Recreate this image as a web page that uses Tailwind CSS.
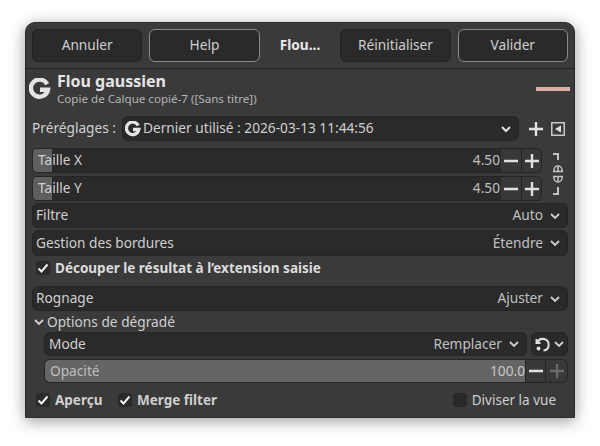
<!DOCTYPE html>
<html lang="fr">
<head>
  <meta charset="UTF-8" />
  <title>Flou gaussien</title>
  <script src="https://cdn.jsdelivr.net/npm/@tailwindcss/browser@4"></script>
</head>
<body class="bg-white font-['Noto_Sans',sans-serif] text-[13.7px] text-[#cfcfcf] overflow-hidden">

<div class="w-[600px] h-[446px] pt-[22px] pl-[25px]">
  <div class="w-[550px] h-[396px] bg-[#3a3a3a] rounded-t-[10px] border border-[#2c2c2c] shadow-[0_3px_16px_rgba(0,0,0,0.4)] flex flex-col">

    <!-- Header -->
    <header class="h-[46px] shrink-0 border-b border-[#222] px-[6px] pt-[6px] flex gap-[7px]">
      <button class="w-[111px] h-[33px] rounded-[6px] bg-[#2a2a2a] border border-[#222]">Annuler</button>
      <button class="w-[111px] h-[33px] rounded-[6px] bg-[#2a2a2a] border border-[#8a8a8a]">Help</button>
      <div class="w-[67px] h-[33px] flex items-center justify-center font-bold text-[#e8e8e8]">Flou...</div>
      <button class="w-[111px] h-[33px] rounded-[6px] bg-[#2a2a2a] border border-[#222]">Réinitialiser</button>
      <button class="w-[111px] h-[33px] rounded-[6px] bg-[#2a2a2a] border border-[#8a8a8a]">Valider</button>
    </header>

    <!-- Title -->
    <div class="h-[40px] pl-[3px] pr-[3px] flex items-start">
      <svg class="w-[22px] h-[22px] mt-[9px]" viewBox="0 0 22 22" fill="none" stroke="#e4e4e4" stroke-width="4.4"><path d="M18.2 6.2A8.6 8.6 0 1 0 19 11.7H11"/></svg>
      <div class="ml-[6px] flex-1">
        <div class="font-bold text-[16px] leading-[20px] text-[#e4e4e4] mt-[2px]">Flou gaussien</div>
        <div class="text-[11.6px] leading-[15px] text-[#b5b5b5]">Copie de Calque copié-7 ([Sans titre])</div>
      </div>
      <div class="w-[34px] h-[4px] mt-[18px] bg-[#dcb0a8] mr-[1px]"></div>
    </div>

    <main class="px-[6px] mt-[7px]">
      <!-- Presets -->
      <div class="h-[25px] flex items-center">
        <span class="w-[90px]">Préréglages :</span>
        <div class="w-[397px] h-[25px] rounded-[6px] bg-[#2a2a2a] border border-[#252525] flex items-center pl-[2px] pr-[6px]">
          <svg class="w-[16px] h-[16px] mr-[2px]" viewBox="0 0 22 22" fill="none" stroke="#e4e4e4" stroke-width="4.6"><path d="M18.2 6.2A8.6 8.6 0 1 0 19 11.7H11"/></svg>
          <span class="flex-1">Dernier utilisé : 2026-03-13 11:44:56</span>
          <svg class="w-[12px] h-[12px]" viewBox="0 0 12 12" fill="none" stroke="#e0e0e0" stroke-width="2"><path d="M2 4l4 4 4-4"/></svg>
        </div>
        <svg class="w-[14px] h-[14px] ml-[10px]" viewBox="0 0 14 14" fill="none" stroke="#e0e0e0" stroke-width="2.4"><path d="M7 0v14M0 7h14"/></svg>
        <svg class="w-[14px] h-[14px] ml-[8px]" viewBox="0 0 14 14"><rect x=".75" y=".75" width="12.5" height="12.5" fill="none" stroke="#c8c8c8" stroke-width="1.5"/><path d="M10 3.5v7L4 7z" fill="#e0e0e0"/></svg>
      </div>

      <!-- Size -->
      <div class="mt-[7px] flex">
        <div class="w-[510px] flex flex-col gap-[3px]">
          <div class="relative h-[25px] rounded-[5px] bg-[#2a2a2a] border border-[#252525] flex items-center overflow-hidden">
            <div class="absolute inset-y-0 left-0 w-[19px] bg-[#5f5f5f]"></div>
            <span class="relative pl-[5px] flex-1">Taille X</span>
            <span class="pr-[1px] text-[#c0c0c0]">4.50</span>
            <div class="w-[21px] h-full bg-[#383838] border-r border-[#252525] flex items-center justify-center"><svg class="w-[14px] h-[14px]" viewBox="0 0 14 14" stroke="#e0e0e0" stroke-width="2.4"><path d="M0 7h14"/></svg></div>
            <div class="w-[19px] h-full bg-[#383838] flex items-center justify-center"><svg class="w-[14px] h-[14px]" viewBox="0 0 14 14" stroke="#e0e0e0" stroke-width="2.4"><path d="M7 0v14M0 7h14"/></svg></div>
          </div>
          <div class="relative h-[25px] rounded-[5px] bg-[#2a2a2a] border border-[#252525] flex items-center overflow-hidden">
            <div class="absolute inset-y-0 left-0 w-[19px] bg-[#5f5f5f]"></div>
            <span class="relative pl-[5px] flex-1">Taille Y</span>
            <span class="pr-[1px] text-[#c0c0c0]">4.50</span>
            <div class="w-[21px] h-full bg-[#383838] border-r border-[#252525] flex items-center justify-center"><svg class="w-[14px] h-[14px]" viewBox="0 0 14 14" stroke="#e0e0e0" stroke-width="2.4"><path d="M0 7h14"/></svg></div>
            <div class="w-[19px] h-full bg-[#383838] flex items-center justify-center"><svg class="w-[14px] h-[14px]" viewBox="0 0 14 14" stroke="#e0e0e0" stroke-width="2.4"><path d="M7 0v14M0 7h14"/></svg></div>
          </div>
        </div>
        <svg class="w-[14px] h-[44px] ml-[8px] mt-[4px]" viewBox="0 0 14 44" fill="none" stroke="#c4c4c4" stroke-width="2"><path d="M3 2h5v6M8 35v7H3"/><path stroke-width="1.5" d="M4 19v-1a4 4 0 0 1 8 0v1M4 25v1a4 4 0 0 0 8 0v-1M3 19.5h10M3 24.5h10M8 15v5M8 24v5"/></svg>
      </div>

      <!-- Combos -->
      <div class="mt-[2px] h-[25px] rounded-[6px] bg-[#2a2a2a] border border-[#252525] flex items-center pl-[3px] pr-[6px]">
        <span class="flex-1">Filtre</span><span class="mr-[6px] text-[#c0c0c0]">Auto</span>
        <svg class="w-[12px] h-[12px]" viewBox="0 0 12 12" fill="none" stroke="#d0d0d0" stroke-width="1.8"><path d="M2 4l4 4 4-4"/></svg>
      </div>
      <div class="mt-[2px] h-[26px] rounded-[6px] bg-[#2a2a2a] border border-[#252525] flex items-center pl-[3px] pr-[6px]">
        <span class="flex-1">Gestion des bordures</span><span class="mr-[6px] text-[#c0c0c0]">Étendre</span>
        <svg class="w-[12px] h-[12px]" viewBox="0 0 12 12" fill="none" stroke="#d0d0d0" stroke-width="1.8"><path d="M2 4l4 4 4-4"/></svg>
      </div>

      <!-- Clip -->
      <div class="mt-[4px] h-[16px] pl-[4px] flex items-center gap-[5px] font-bold text-[13.5px] text-[#dcdcdc]">
        <div class="w-[14px] h-[14px] rounded-[3px] bg-[#2a2a2a] flex items-center justify-center"><svg class="w-[12px] h-[12px]" viewBox="0 0 12 12" fill="none" stroke="#f0f0f0" stroke-width="2"><path d="M1.5 6.5l3 3 6-7"/></svg></div>
        <span>Découper le résultat à l’extension saisie</span>
      </div>

      <div class="mt-[10px] h-[25px] rounded-[6px] bg-[#2a2a2a] border border-[#252525] flex items-center pl-[3px] pr-[6px]">
        <span class="flex-1">Rognage</span><span class="mr-[6px] text-[#c0c0c0]">Ajuster</span>
        <svg class="w-[12px] h-[12px]" viewBox="0 0 12 12" fill="none" stroke="#d0d0d0" stroke-width="1.8"><path d="M2 4l4 4 4-4"/></svg>
      </div>

      <!-- Blending -->
      <div class="mt-[1px] h-[20px] pl-[1px] flex items-center gap-[2px]">
        <svg class="w-[12px] h-[12px]" viewBox="0 0 12 12" fill="none" stroke="#d0d0d0" stroke-width="1.8"><path d="M2 4l4 4 4-4"/></svg>
        <span>Options de dégradé</span>
      </div>
      <div class="ml-[12px]">
        <div class="flex gap-[4px]">
          <div class="flex-1 h-[24px] rounded-[6px] bg-[#2a2a2a] border border-[#252525] flex items-center pl-[4px] pr-[6px]">
            <span class="flex-1">Mode</span><span class="mr-[6px] text-[#c0c0c0]">Remplacer</span>
            <svg class="w-[12px] h-[12px]" viewBox="0 0 12 12" fill="none" stroke="#d0d0d0" stroke-width="1.8"><path d="M2 4l4 4 4-4"/></svg>
          </div>
          <div class="w-[37px] h-[24px] rounded-[6px] bg-[#2a2a2a] border border-[#252525] flex items-center pl-[3px] gap-[1px]">
            <svg class="w-[17px] h-[17px]" viewBox="0 0 17 17" fill="none" stroke="#e0e0e0" stroke-width="2"><path d="M2.5 6.5A5.8 5.8 0 1 1 8.5 14.5M1.5 3v4h4"/><circle cx="3.5" cy="12.5" r="1.9" fill="#e0e0e0" stroke="none"/></svg>
            <svg class="w-[12px] h-[12px]" viewBox="0 0 12 12" fill="none" stroke="#d0d0d0" stroke-width="1.8"><path d="M2 4l4 4 4-4"/></svg>
          </div>
        </div>
        <div class="mt-[3px] h-[24px] rounded-[6px] bg-[#2a2a2a] border border-[#252525] flex items-center overflow-hidden">
          <div class="flex-1 h-full bg-[#656565] flex items-center pl-[5px]">
            <span class="flex-1 text-[#bdbdbd]">Opacité</span><span class="text-[#c8c8c8]">100.0</span>
          </div>
          <div class="w-[21px] h-full bg-[#383838] border-x border-[#252525] flex items-center justify-center"><svg class="w-[14px] h-[14px]" viewBox="0 0 14 14" stroke="#e0e0e0" stroke-width="2.4"><path d="M0 7h14"/></svg></div>
          <div class="w-[21px] h-full bg-[#383838] flex items-center justify-center"><svg class="w-[14px] h-[14px]" viewBox="0 0 14 14" stroke="#6a6a6a" stroke-width="2.4"><path d="M7 0v14M0 7h14"/></svg></div>
        </div>
      </div>

      <!-- Footer -->
      <div class="mt-[9px] h-[16px] pl-[4px] flex items-center text-[13.5px]">
        <div class="w-[14px] h-[14px] rounded-[3px] bg-[#2a2a2a] flex items-center justify-center"><svg class="w-[12px] h-[12px]" viewBox="0 0 12 12" fill="none" stroke="#f0f0f0" stroke-width="2"><path d="M1.5 6.5l3 3 6-7"/></svg></div>
        <span class="ml-[5px] w-[63px] font-bold">Aperçu</span>
        <div class="w-[14px] h-[14px] rounded-[3px] bg-[#2a2a2a] flex items-center justify-center"><svg class="w-[12px] h-[12px]" viewBox="0 0 12 12" fill="none" stroke="#f0f0f0" stroke-width="2"><path d="M1.5 6.5l3 3 6-7"/></svg></div>
        <span class="ml-[5px] font-bold flex-1">Merge filter</span>
        <div class="w-[14px] h-[14px] rounded-[3px] bg-[#2a2a2a]"></div>
        <span class="ml-[5px] mr-[12px]">Diviser la vue</span>
      </div>
    </main>
  </div>
</div>

</body>
</html>
